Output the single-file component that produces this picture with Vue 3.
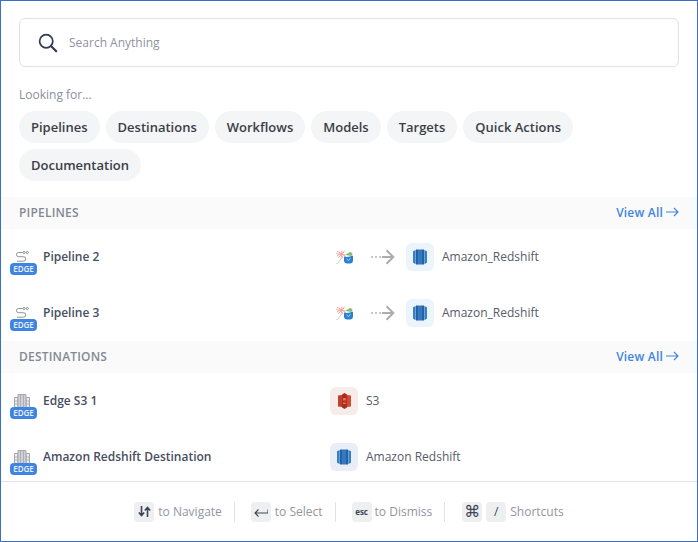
<script setup>
const chips = ['Pipelines', 'Destinations', 'Workflows', 'Models', 'Targets', 'Quick Actions', 'Documentation']

const pipelines = [
  { id: 1, name: 'Pipeline 2', dest: 'Amazon_Redshift' },
  { id: 2, name: 'Pipeline 3', dest: 'Amazon_Redshift' }
]

const destinations = [
  { id: 1, name: 'Edge S3 1', type: 'S3', kind: 's3' },
  { id: 2, name: 'Amazon Redshift Destination', type: 'Amazon Redshift', kind: 'redshift' }
]
</script>

<template>
  <div class="page">
    <div class="top">
      <div class="search">
        <svg class="search-icon" width="20" height="20" viewBox="0 0 20 20" fill="none">
          <circle cx="8.200" cy="8.200" r="6.600" stroke="#2f3b52" stroke-width="1.700" />
          <path d="M13 13l5.200 5.200" stroke="#2f3b52" stroke-width="2.200" stroke-linecap="round" />
        </svg>
        <span class="placeholder">Search Anything</span>
      </div>
      <div class="looking">Looking for...</div>
      <div class="chips">
        <span class="chip" v-for="chip in chips" :key="chip">{{ chip }}</span>
      </div>
    </div>

    <div class="results">
      <div class="section-head">
        <span>PIPELINES</span>
        <a class="view-all">View All
          <svg width="13" height="10" viewBox="0 0 13 10" fill="none">
            <path d="M0 5h12M8 1l4 4-4 4" stroke="#3f84e0" stroke-width="1.100" />
          </svg>
        </a>
      </div>
      <div class="row" v-for="p in pipelines" :key="p.id">
        <div class="left">
          <div class="entity">
            <svg width="14" height="14" viewBox="0 0 14 14" fill="none" stroke="#8d929b" stroke-width="1">
              <path d="M7.500 2.500H3.500a2 2 0 0 0 0 4.200h5a2.200 2.200 0 0 1 0 4.500H2" />
              <circle cx="9" cy="2.500" r="1.100" />
              <circle cx="12.300" cy="2.500" r="1.100" />
            </svg>
            <span class="edge">EDGE</span>
          </div>
          <span class="name">{{ p.name }}</span>
        </div>
        <div class="right">
          <svg class="source" width="18" height="15" viewBox="0 0 18 15">
            <path d="M1 1l9 5.500M9 0.500L2 8M0 3.500l9 1.500M3 1.500l4 6M6 0.500l-1 8M1 6l7-4" stroke="#f3a0a0" stroke-width="0.900" fill="none" />
            <path d="M0.500 13.500c2.500 1 3-5 6.500-6" stroke="#c2c4c9" stroke-width="0.800" fill="none" />
            <path d="M9 5l5-3 2.500 1-1 3z" fill="#82bd7e" />
            <path d="M8 6.500c3 1 6 0 9-1v5.500a3 3 0 0 1-3 2.500h-3a3 3 0 0 1-3-2.500z" fill="#2d7fd0" />
            <path d="M10.500 9l2 1.500 2-2.500" stroke="#d7ecff" stroke-width="0.700" fill="none" />
          </svg>
          <svg class="flow" width="24" height="16" viewBox="0 0 24 16" fill="none">
            <path d="M0 8h2M4 8h2M8 8h2" stroke="#b5b5b5" stroke-width="1.300" />
            <path d="M11 8h11.500M15.500 1.200L22.300 8l-6.800 6.800" stroke="#adadad" stroke-width="2" />
          </svg>
          <div class="tile blue">
            <svg width="14" height="16" viewBox="0 0 14 16">
              <path d="M0 2.200L2.700 1v14L0 13.800z" fill="#3a7fc4" />
              <path d="M3 0.500h2.800v15H3z" fill="#1f62a9" />
              <path d="M5.800 0.500h2.400v15H5.800z" fill="#2f79c4" />
              <path d="M8.200 0.500H11v15H8.200z" fill="#1f62a9" />
              <path d="M14 2.200L11.300 1v14l2.700-1.200z" fill="#3a7fc4" />
            </svg>
          </div>
          <span class="dest">{{ p.dest }}</span>
        </div>
      </div>

      <div class="section-head">
        <span>DESTINATIONS</span>
        <a class="view-all">View All
          <svg width="13" height="10" viewBox="0 0 13 10" fill="none">
            <path d="M0 5h12M8 1l4 4-4 4" stroke="#3f84e0" stroke-width="1.100" />
          </svg>
        </a>
      </div>
      <div class="row" v-for="d in destinations" :key="d.id">
        <div class="left">
          <div class="entity">
            <svg width="16" height="14" viewBox="0 0 16 14" fill="none" stroke="#a4a7ad" stroke-width="1">
              <path d="M0.500 3.500h3.500V14H0.500zM12 3.500h3.500V14H12z" fill="#eceded" />
              <path d="M4 0.500h8V14H4z" fill="#cfd1d5" />
              <path d="M6.500 1v13M9.500 1v13M0.500 7h3.500M12 7h3.500M0.500 10h3.500M12 10h3.500" stroke-width="0.800" />
            </svg>
            <span class="edge">EDGE</span>
          </div>
          <span class="name">{{ d.name }}</span>
        </div>
        <div class="right">
          <div class="tile" :class="d.kind === 's3' ? 'red' : 'navy'">
            <svg v-if="d.kind === 's3'" width="13" height="16" viewBox="0 0 13 16">
              <path d="M0 2.500l4-0.500v12l-4-0.500z" fill="#c43e2c" />
              <path d="M13 2.500L9 2v12l4-0.500z" fill="#d24a36" />
              <path d="M4 1.500L6.500 0 9 1.500v13L6.500 16 4 14.500z" fill="#a92e20" />
              <path d="M5 5h3v2.500H5zM5 9.500h3V11H5z" fill="#d9715f" />
            </svg>
            <svg v-else width="14" height="16" viewBox="0 0 14 16">
              <path d="M0 2.200L2.700 1v14L0 13.800z" fill="#3a7fc4" />
              <path d="M3 0.500h2.800v15H3z" fill="#1f62a9" />
              <path d="M5.800 0.500h2.400v15H5.800z" fill="#2f79c4" />
              <path d="M8.200 0.500H11v15H8.200z" fill="#1f62a9" />
              <path d="M14 2.200L11.300 1v14l2.700-1.200z" fill="#3a7fc4" />
            </svg>
          </div>
          <span class="dest">{{ d.type }}</span>
        </div>
      </div>
    </div>

    <div class="footer">
      <div class="hint">
        <span class="key">
          <svg width="13" height="11" viewBox="0 0 13 11" fill="none" stroke="#3d4656" stroke-width="1.600">
            <path d="M3.500 0v9.500M0.800 6.500l2.700 3 2.700-3M9.500 11V1.500M6.800 4.500l2.700-3 2.700 3" />
          </svg>
        </span>
        <span>to Navigate</span>
      </div>
      <i class="sep tight-left"></i>
      <div class="hint">
        <span class="key">
          <svg width="14" height="10" viewBox="0 0 14 10" fill="none" stroke="#3d4656" stroke-width="1.100">
            <path d="M14 2.500V6H1M4.500 2.500L1 6l3.500 3.500" />
          </svg>
        </span>
        <span>to Select</span>
      </div>
      <i class="sep tight-left"></i>
      <div class="hint tight">
        <span class="key esc">esc</span>
        <span>to Dismiss</span>
      </div>
      <i class="sep tight-left wide-right"></i>
      <div class="hint">
        <span class="key cmd">⌘</span>
        <span class="key slash">/</span>
        <span>Shortcuts</span>
      </div>
    </div>
  </div>
</template>

<style>
html, body {
  margin: 0;
  background: #fff;
}
</style>

<style scoped>
.page {
  width: 698px;
  height: 542px;
  box-sizing: border-box;
  border: 1px solid #3a70cc;
  display: flex;
  flex-direction: column;
  overflow: hidden;
  font-family: "Open Sans", "Liberation Sans", sans-serif;
  background: #fff;
}

.top {
  padding: 17px 18px 16px 18px;
}
.search {
  height: 49px;
  box-sizing: border-box;
  border: 1px solid #e0e2ea;
  border-radius: 6px;
  display: flex;
  align-items: center;
  padding-left: 18px;
}
.search-icon {
  margin-right: 11px;
}
.placeholder {
  font-size: 12px;
  color: #8e93a1;
}
.looking {
  margin-top: 19px;
  font-size: 12px;
  line-height: 17px;
  color: #8a8f9c;
}
.chips {
  margin-top: 8px;
  display: flex;
  flex-wrap: wrap;
  gap: 6px;
}
.chip {
  height: 32px;
  line-height: 32px;
  padding: 0 12px;
  border-radius: 16px;
  background: #f4f5f7;
  font-size: 13px;
  font-weight: 600;
  color: #3a3e46;
}

.results {
  flex: 1;
  overflow: hidden;
}
.section-head {
  height: 32px;
  box-sizing: border-box;
  padding: 0 18px 2px 18px;
  display: flex;
  align-items: center;
  justify-content: space-between;
  background: #fafafa;
  font-size: 12px;
  font-weight: 600;
  color: #838895;
  letter-spacing: 0.2px;
}
.view-all {
  display: flex;
  align-items: center;
  gap: 3px;
  color: #3f84e0;
}
.row {
  height: 56px;
  display: flex;
  align-items: center;
}
.left {
  width: 329px;
  display: flex;
  align-items: center;
}
.entity {
  position: relative;
  width: 42px;
  height: 28px;
  display: flex;
  justify-content: center;
  padding-right: 6px;
  box-sizing: border-box;
  margin-top: 14px;
  padding-left: 5px;
}
.edge {
  position: absolute;
  left: 9px;
  top: 13px;
  width: 27px;
  height: 12px;
  border-radius: 4px;
  background: #3f84e0;
  color: #eaf2fd;
  font-size: 8px;
  font-weight: 600;
  line-height: 12px;
  text-align: center;
}
.name {
  font-size: 12px;
  font-weight: 600;
  color: #474e5f;
  margin-bottom: 1px;
}
.right {
  display: flex;
  align-items: center;
}
.source {
  margin: 0 17px 0 6px;
}
.flow {
  margin-right: 11px;
}
.tile {
  width: 28px;
  height: 28px;
  border-radius: 6px;
  display: flex;
  align-items: center;
  justify-content: center;
  margin-right: 8px;
}
.blue {
  background: #ebf3fb;
}
.red {
  background: #f6ece9;
}
.navy {
  background: #e9eef6;
}
.dest {
  font-size: 12px;
  color: #565b68;
  margin-bottom: 2px;
}

.footer {
  height: 60px;
  box-sizing: border-box;
  border-top: 1px solid #e2e3e8;
  display: flex;
  align-items: center;
  justify-content: center;
  font-size: 12px;
  color: #9196a1;
}
.hint {
  display: flex;
  align-items: center;
  gap: 4px;
}
.tight {
  gap: 3px;
}
.key {
  width: 20px;
  height: 20px;
  border-radius: 4px;
  background: #eeeff1;
  display: flex;
  align-items: center;
  justify-content: center;
  color: #3d4656;
}
.esc {
  font-size: 8px;
  font-weight: 700;
}
.cmd {
  font-size: 16px;
  font-family: "DejaVu Sans", sans-serif;
}
.slash {
  font-size: 12px;
}
.sep {
  width: 1px;
  height: 20px;
  background: #e2e3e8;
  margin: 0 16px 0 13px;
}
.tight-left {
  margin-left: 12px;
}
.wide-right {
  margin-right: 17px;
}
</style>
